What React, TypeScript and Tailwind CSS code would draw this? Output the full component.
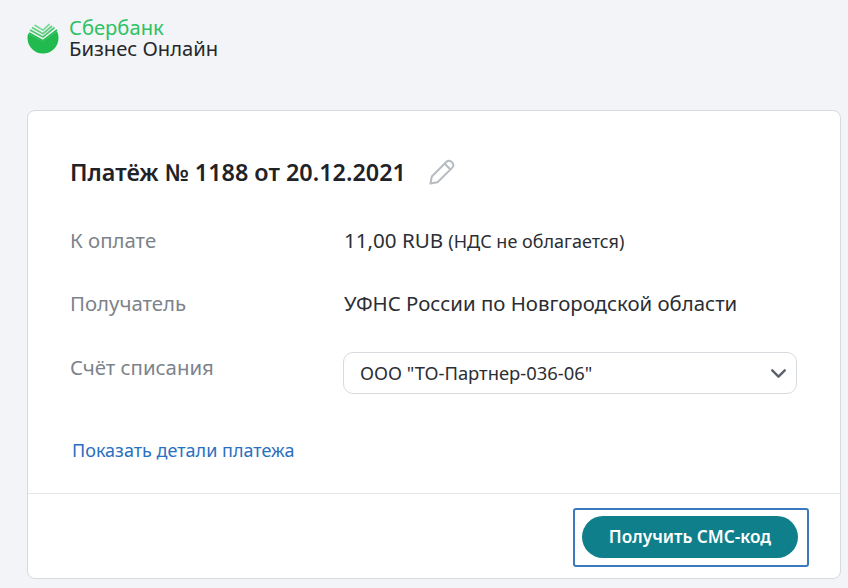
import { ChevronDown } from 'lucide-react'

function Logo() {
  return (
    <svg width="32" height="32" viewBox="0 0 32 32" className="shrink-0">
      <circle cx="16" cy="16" r="15.500" fill="#21ba4e" />
      <path d="M0 0 H32 V7.500 L16 19.500 L0 11 Z" fill="#f2f4f7" />
      <path d="M1.500 9.500 L16 17.500 L29 7" fill="none" stroke="#f2f4f7" strokeWidth="1.500" />
      <path d="M2 11 L16 18.700 L30 7.800" fill="none" stroke="#21ba4e" strokeWidth="1.700" />
      <path d="M3 8 L16 15 L27.500 5.500" fill="none" stroke="#4cc871" strokeWidth="1.700" />
      <path d="M5 5.500 L16 11.700 L25 4" fill="none" stroke="#5fcf81" strokeWidth="1.700" />
      <path d="M7.500 3 L16 8.200 L22.500 2.200" fill="none" stroke="#7ad898" strokeWidth="1.700" />
    </svg>
  )
}

function EditIcon() {
  return (
    <svg width="28" height="28" viewBox="0 0 28 28" fill="none" stroke="#b7bcc2" strokeWidth="2" strokeLinejoin="round" strokeLinecap="round">
      <path d="M2.500 25.500 L3.800 18.500 L18.500 3.800 C20 2.300 21.800 2.300 23.300 3.800 L24.300 4.800 C25.800 6.300 25.800 8.100 24.300 9.600 L9.500 24.300 Z" />
      <path d="M17 6 L22.200 11.300" />
    </svg>
  )
}

function Row({ label, children }: { label: string; children: React.ReactNode }) {
  return (
    <div className="flex items-start">
      <div className="-ml-[1px] w-[274px] shrink-0 text-[20.400px] leading-[24px] text-[#7d838a]">{label}</div>
      <div className="flex-1">{children}</div>
    </div>
  )
}

export default function App() {
  return (
    <div className="h-[588px] w-[848px] overflow-hidden bg-[#f2f4f7] font-['Noto_Sans',sans-serif]">
      <header className="flex items-center gap-[10px] pl-[27px] pt-[17px]">
        <Logo />
        <div>
          <div className="text-[20.200px] leading-[21px] text-[#2cc263]">Сбербанк</div>
          <div className="text-[20.200px] leading-[21px] text-[#26282b]">Бизнес Онлайн</div>
        </div>
      </header>

      <main className="ml-[27px] mt-[51px] h-[469px] w-[814px] rounded-[8px] border border-[#d7dade] bg-white">
        <div className="h-[382px] pl-[43px] pr-[43px] pt-[45px]">
          <div className="-ml-[1px] flex items-center gap-[22px]">
            <h1 className="text-[23.400px] font-semibold leading-[32px] text-[#1f2226]">Платёж № 1188 от 20.12.2021</h1>
            <EditIcon />
          </div>

          <div className="mt-[40px] flex flex-col gap-[37px]">
            <Row label="К оплате">
              <span className="text-[20.600px] leading-[24px] text-[#2b2e33]">11,00 RUB</span>
              <span className="ml-[5px] text-[18px] leading-[24px] text-[#2b2e33]">(НДС не облагается)</span>
            </Row>
            <Row label="Получатель">
              <span className="text-[20.400px] leading-[24px] text-[#2b2e33]">УФНС России по Новгородской области</span>
            </Row>
            <div className="mt-[1px] flex items-start">
              <div className="-ml-[1px] w-[273px] shrink-0 text-[20.400px] leading-[24px] text-[#7d838a]">Счёт списания</div>
              <div className="-mt-[3px] flex h-[42px] w-[455px] items-center justify-between rounded-[10px] border border-[#d7dade] pl-[16px] pr-[5px] text-[18.400px] text-[#2b2e33]">
                <span>ООО "ТО-Партнер-036-06"</span>
                <ChevronDown size={25} strokeWidth={2.300} className="text-[#5d636a]" />
              </div>
            </div>
          </div>

          <a href="#details" className="ml-[1px] mt-[44px] block text-[18px] leading-[24px] text-[#2a6fc0]">Показать детали платежа</a>
        </div>

        <footer className="flex h-[85px] justify-end border-t border-[#e4e6e9] pr-[31px] pt-[14px]">
          <div className="flex h-[59px] w-[236px] items-center justify-center rounded-[3px] border-[2px] border-[#3a79bd]">
            <button type="button" className="mb-[2px] mr-[2px] h-[42px] w-[216px] rounded-full bg-[#107f8c] text-[17.200px] font-semibold text-white">
              Получить СМС-код
            </button>
          </div>
        </footer>
      </main>
    </div>
  )
}
